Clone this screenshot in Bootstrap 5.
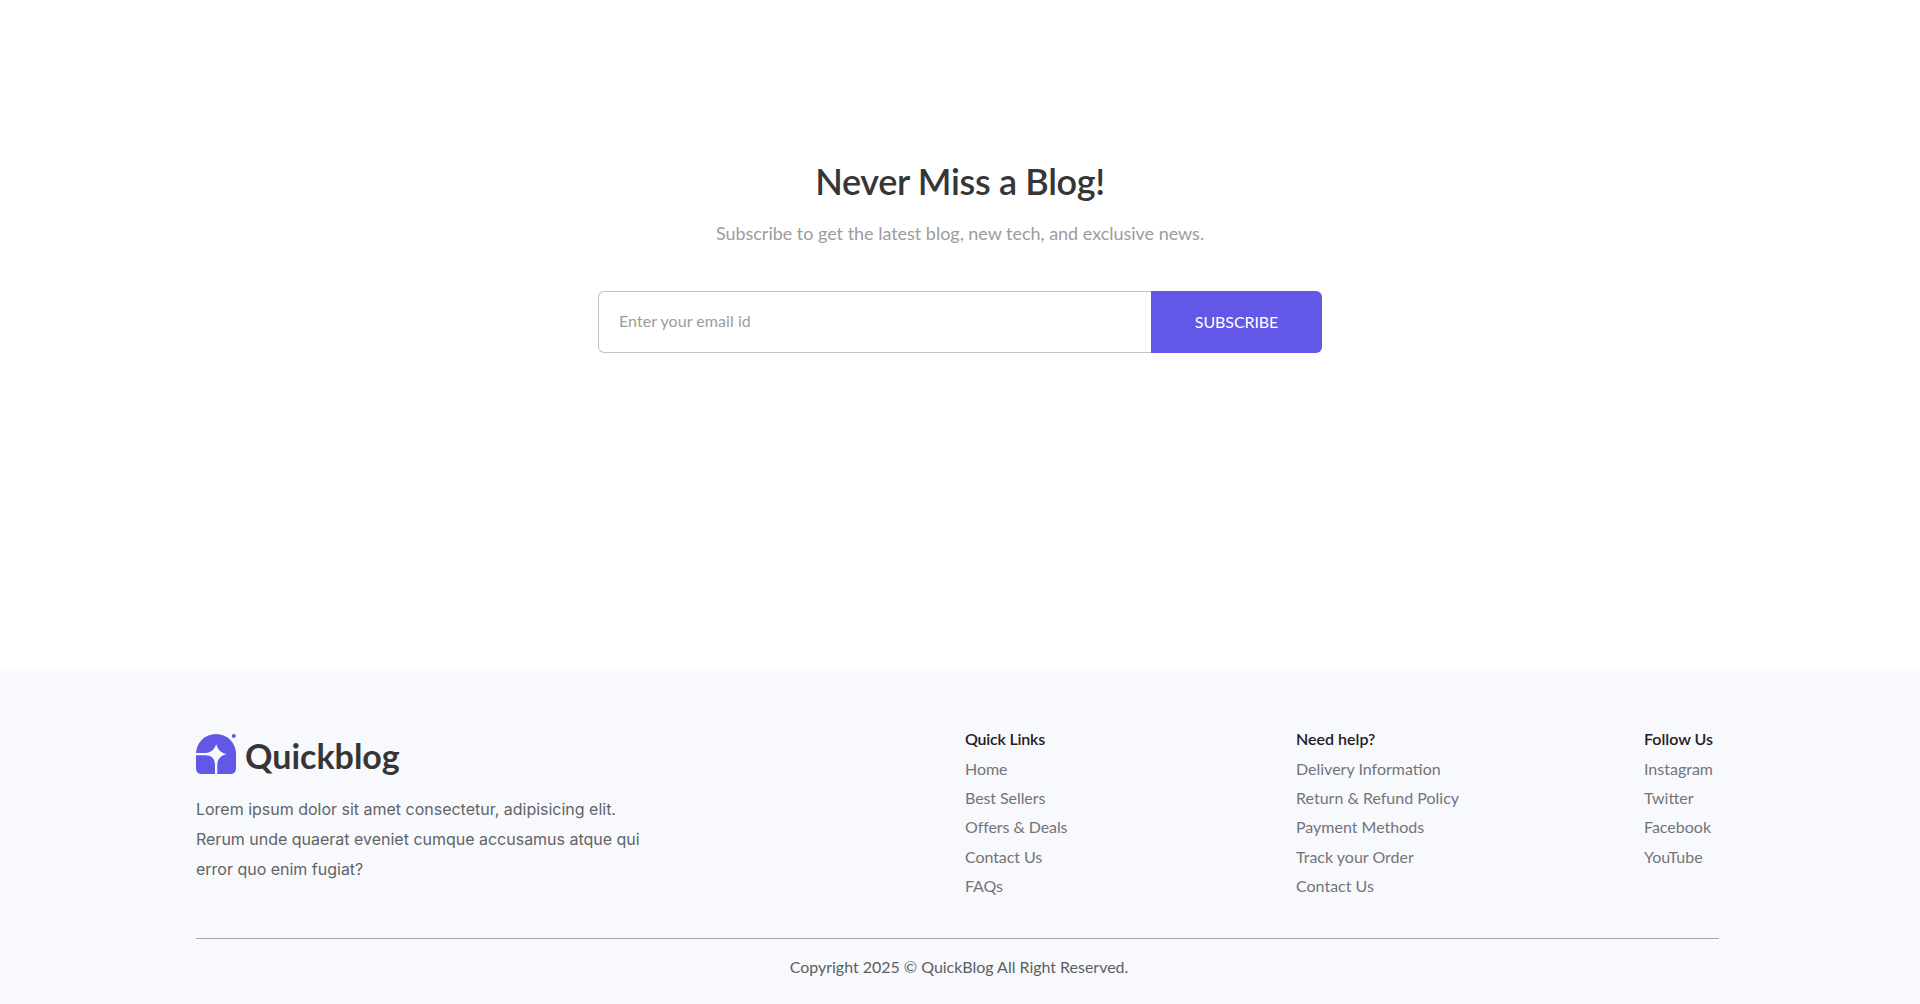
<!DOCTYPE html>
<html lang="en">
<head>
<meta charset="utf-8">
<meta name="viewport" content="width=device-width, initial-scale=1">
<title>QuickBlog</title>
<link href="https://cdn.jsdelivr.net/npm/bootstrap@5.3.0/dist/css/bootstrap.min.css" rel="stylesheet">
<style>
  body { font-family: Lato, "Liberation Sans", sans-serif; background: #fff; color: #5d5e62; line-height: 24px; overflow: hidden; }
  .newsletter { height: 669px; padding-top: 159px; }
  .newsletter-title { font-size: 36px; font-weight: 600; line-height: 44px; color: #363636; letter-spacing: -.33px; margin-bottom: 16px; }
  .newsletter-text { font-size: 18px; line-height: 28px; color: #9c9c9c; letter-spacing: -.02px; margin-bottom: 44px; }
  .subscribe-form { width: 724px; height: 62px; }
  .subscribe-form .form-control { border: 1px solid #c4c4c6; border-right: 0; border-radius: 6px 0 0 6px; padding: 0 20px 2px; font-size: 16px; color: #5d5e62; }
  .subscribe-form .form-control::placeholder { color: #9c9c9c; opacity: 1; letter-spacing: .05px; }
  .subscribe-form .btn { width: 171px; border: 0; border-radius: 0 6px 6px 0; background: #6357e8; color: #fff; font-size: 16px; letter-spacing: -.1px; }
  .site-footer { height: 335px; background: #f8f9fd; padding: 60px 201px 0 196px; }
  .footer-main { height: 210px; border-bottom: 1px solid #a7a8ac; }
  .brand-mark { margin-top: 5px; }
  .brand-name { font-size: 34px; line-height: 44px; font-weight: 700; color: #363636; margin: 5px 0 0 8px; }
  .brand-text { font-family: Inter, "Liberation Sans", sans-serif; color: #626367; width: 460px; line-height: 30px; margin-top: 16px; letter-spacing: -.01px; }
  .link-cols { width: 754px; }
  .col-links { width: 331px; }
  .col-help { width: 348px; }
  .links-title { font-size: 16px; line-height: 24px; font-weight: 600; color: #1f2024; margin: -2px 0 6px; }
  .links-list { line-height: 24px; gap: 5.2px; }
  .col-links .links-title { letter-spacing: -.2px; }
  .col-links .links-list { letter-spacing: -.08px; }
  .links-list a { color: #737478; text-decoration: none; }
  .copyright { padding: 16px 0 0 3px; letter-spacing: -.02px; }
</style>
<script src="https://cdn.jsdelivr.net/npm/bootstrap@5.3.0/dist/js/bootstrap.bundle.min.js" defer></script>
</head>
<body>
<main class="newsletter d-flex flex-column align-items-center text-center">
  <h1 class="newsletter-title">Never Miss a Blog!</h1>
  <p class="newsletter-text">Subscribe to get the latest blog, new tech, and exclusive news.</p>
  <form class="subscribe-form d-flex">
    <input class="form-control shadow-none" type="email" placeholder="Enter your email id" aria-label="Email">
    <button class="btn flex-shrink-0" type="submit">SUBSCRIBE</button>
  </form>
</main>
<footer class="site-footer">
  <div class="footer-main d-flex justify-content-between">
    <div>
      <div class="d-flex align-items-start">
        <svg class="brand-mark" width="41" height="40" viewBox="0 0 41 40" aria-hidden="true">
          <path fill="#6357e8" d="M0 20a20 20 0 0 1 40 0v14.500a5.500 5.500 0 0 1-5.500 5.500h-29a5.500 5.500 0 0 1-5.500-5.500z"/>
          <path fill="#f8f9fd" d="M0 19h9.500C15 18.500 18.500 15.500 20.200 10C21.700 15.500 24.500 18.700 30.500 20.200C24.500 21.700 21.300 25 21.300 31V40H19V31C19 25 15.500 21.300 9.500 21.300H0z"/>
          <circle cx="37.800" cy="2.100" r="2" fill="#6357e8"/>
        </svg>
        <span class="brand-name">Quickblog</span>
      </div>
      <p class="brand-text mb-0">Lorem ipsum dolor sit amet consectetur, adipisicing elit. Rerum unde quaerat eveniet cumque accusamus atque qui error quo enim fugiat?</p>
    </div>
    <div class="link-cols d-flex">
      <div class="col-links">
        <h2 class="links-title">Quick Links</h2>
        <ul class="links-list list-unstyled d-flex flex-column mb-0">
          <li><a href="#">Home</a></li>
          <li><a href="#">Best Sellers</a></li>
          <li><a href="#">Offers &amp; Deals</a></li>
          <li><a href="#">Contact Us</a></li>
          <li><a href="#">FAQs</a></li>
        </ul>
      </div>
      <div class="col-help">
        <h2 class="links-title">Need help?</h2>
        <ul class="links-list list-unstyled d-flex flex-column mb-0">
          <li><a href="#">Delivery Information</a></li>
          <li><a href="#">Return &amp; Refund Policy</a></li>
          <li><a href="#">Payment Methods</a></li>
          <li><a href="#">Track your Order</a></li>
          <li><a href="#">Contact Us</a></li>
        </ul>
      </div>
      <div>
        <h2 class="links-title">Follow Us</h2>
        <ul class="links-list list-unstyled d-flex flex-column mb-0">
          <li><a href="#">Instagram</a></li>
          <li><a href="#">Twitter</a></li>
          <li><a href="#">Facebook</a></li>
          <li><a href="#">YouTube</a></li>
        </ul>
      </div>
    </div>
  </div>
  <p class="copyright text-center mb-0">Copyright 2025 © QuickBlog All Right Reserved.</p>
</footer>
</body>
</html>
